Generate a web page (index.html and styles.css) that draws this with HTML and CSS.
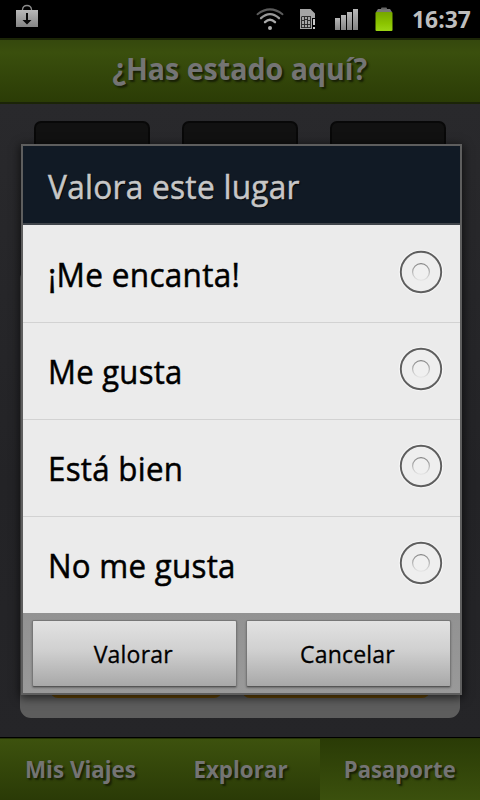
FILE: index.html
```html
<!DOCTYPE html>
<html lang="es">
<head>
<meta charset="utf-8">
<title>Valora este lugar</title>
<link rel="stylesheet" href="styles.css">
</head>
<body>
<div class="screen">
  <header class="status">
    <svg width="480" height="38" viewBox="0 0 480 38">
      <defs>
        <linearGradient id="grey" x1="0" y1="0" x2="0" y2="1"><stop offset="0" stop-color="#b8b8b8"/><stop offset="1" stop-color="#858585"/></linearGradient>
        <linearGradient id="green" x1="0" y1="0" x2="0" y2="1"><stop offset="0" stop-color="#76a600"/><stop offset="0.600" stop-color="#8bc400"/><stop offset="1" stop-color="#9bd414"/></linearGradient>
      </defs>
      <path d="M22.500 11V9.500Q23 5.500 27 5.500T31.500 9.500V11" fill="none" stroke="#8c8c8c" stroke-width="1.300"/>
      <path d="M16 10H38V27H16Z" fill="url(#grey)"/>
      <path d="M26 13H28V20H31.500L27 24.500L22.500 20H26Z" fill="#080808"/>
      <g fill="none" stroke-linecap="round">
        <path d="M257.500 14.200Q270 4.500 282.500 14.200" stroke="#5c5c5c" stroke-width="2"/>
        <path d="M261 18.200Q270 10 279 18.200" stroke="#999" stroke-width="2.300"/>
        <path d="M265 22.200Q270 17.500 275 22.200" stroke="#aaa" stroke-width="2.400"/>
      </g>
      <circle cx="270" cy="28" r="2" fill="#b0b0b0"/>
      <path d="M300 9H310.500L315 13.500V18H312V29H300Z" fill="#a5a5a5"/>
      <path d="M301.500 16.500H311M301.500 27.500H311M301.500 17V28M310.500 17V28M304.500 17V28M307.500 17V28M302 20.500H304M302 24.500H304M308 20.500H310M308 24.500H310M304.500 19.500H308M304.500 24.500H308" stroke="#222" stroke-width="0.900" fill="none"/>
      <path d="M313 19H315V25H313ZM313 27H315V29H313Z" fill="#c8c8c8"/>
      <g fill="url(#grey)"><rect x="335" y="18" width="5" height="12"/><rect x="341" y="15" width="5" height="15"/><rect x="347" y="12" width="5" height="18"/><rect x="353" y="9" width="5" height="21"/></g>
      <path d="M376 12L378 9H390L392 12Z" fill="#777"/><rect x="381" y="7.500" width="6" height="2" rx="1" fill="#666"/>
      <rect x="375.500" y="12" width="17" height="19" rx="1" fill="url(#green)"/>
    </svg>
    <span class="clock"><span class="fit">16:37</span></span>
  </header>
  <div class="appbar"><span class="fit">¿Has estado aquí?</span></div>
  <main class="page">
    <div class="slots"><i></i><i></i><i></i></div>
    <section class="card"><div class="actions"><i></i><i></i></div></section>
  </main>
  <nav class="tabs">
    <div class="tab"><span class="fit">Mis Viajes</span></div>
    <div class="tab"><span class="fit">Explorar</span></div>
    <div class="tab on"><span class="fit">Pasaporte</span></div>
  </nav>
  <div class="dialog">
    <h1><span class="fit">Valora este lugar</span></h1>
    <div class="option love"><span class="fit">¡Me encanta!</span><svg class="radio" viewBox="0 0 46 46"><use href="#dot"/></svg></div>
    <div class="option like"><span class="fit">Me gusta</span><svg class="radio" viewBox="0 0 46 46"><use href="#dot"/></svg></div>
    <div class="option fine"><span class="fit">Está bien</span><svg class="radio" viewBox="0 0 46 46"><use href="#dot"/></svg></div>
    <div class="option dislike"><span class="fit">No me gusta</span><svg class="radio" viewBox="0 0 46 46"><use href="#dot"/></svg></div>
    <div class="buttons"><button><span class="fit">Valorar</span></button><button><span class="fit">Cancelar</span></button></div>
  </div>
</div>
<svg width="0" height="0" class="defs">
  <linearGradient id="ring" x1="0" y1="0" x2="0" y2="1"><stop offset="0" stop-color="#858585"/><stop offset="1" stop-color="#e6e6e6"/></linearGradient>
  <symbol id="dot" viewBox="0 0 46 46"><circle cx="23" cy="23" r="22.300" fill="#f7f7f7"/><circle cx="23" cy="23" r="20.200" fill="#eeeeee" stroke="#5e5e5e" stroke-width="1.900"/><circle cx="23" cy="23" r="8.400" fill="#f0f0f0" stroke="url(#ring)" stroke-width="1.200"/></symbol>
</svg>
</body>
</html>
```
FILE: styles.css
```css
* { box-sizing: border-box; }
body { margin: 0; background: #000; font-family: "Open Sans", "Noto Sans", sans-serif; }
.screen { position: relative; width: 480px; height: 800px; overflow: hidden; display: flex; flex-direction: column; }
.defs { position: absolute; }
.fit { display: inline-block; white-space: nowrap; }
.status { height: 38px; flex: none; background: #000; position: relative; }
.status svg { display: block; }
.clock { position: absolute; right: 9px; top: 0; line-height: 38px; font-size: 24px; font-weight: 700; color: #bebebe; }
.clock .fit { transform: scaleX(.95); transform-origin: right; }
.appbar { height: 66px; flex: none; border-top: 2px solid #1c2607; border-bottom: 2px solid #1b2408; background: linear-gradient(#35480d, #3a4f0d 20%, #2b3c06); display: flex; align-items: center; justify-content: center; font-size: 30px; font-weight: 700; color: #747474; text-shadow: 2px 2px 2px #171f05; padding-bottom: 6px; }
.appbar .fit { transform: scaleX(.953); }
.page { height: 633px; flex: none; background: linear-gradient(#29292c, #232326 60%, #252528); padding: 17px 20px 0; overflow: hidden; }
.slots { display: flex; gap: 32px; padding: 0 14px; }
.slots i { width: 116px; height: 116px; border: 2px solid #080808; border-radius: 7px; background: #111; }
.card { height: 450px; margin-top: 31px; border-radius: 11px; background: #5d5d5d; display: flex; align-items: flex-end; padding: 0 30px 20px; }
.actions { flex: 1; display: flex; gap: 20px; }
.actions i { flex: 1; height: 50px; border-radius: 8px; background: #6a4806; }
.actions i:first-child { flex: none; width: 172px; }
.tabs { height: 62px; flex: none; display: grid; grid-template-columns: 1fr 1fr 1fr; margin-top: auto; border-top: 1px solid #263407; background: #34460a; }
.tab { display: flex; align-items: center; justify-content: center; padding-bottom: 3px; background: linear-gradient(#3d520e, #2a3a06); font-size: 24px; font-weight: 700; color: #747474; text-shadow: 2px 2px 2px #171f05; }
.tab .fit { transform: scaleX(.933); }
.tab.on { background: linear-gradient(#2a3b06, #3b500d); }
.tab.on .fit { transform: scaleX(.92); }
.dialog { position: absolute; left: 21px; top: 144px; width: 441px; height: 551px; border: 2px solid #5e5e5e; background: #ebebeb; box-shadow: 0 2px 9px 1px rgba(0,0,0,.65); display: flex; flex-direction: column; }
h1 { margin: 0; height: 79px; flex: none; background: #111a25; border-bottom: 2px solid #40454b; font-weight: 400; font-size: 33px; line-height: 82px; padding-left: 25px; color: #c7c7c7; text-shadow: 1px 1px 1px #000; -webkit-text-stroke: .5px #c7c7c7; }
h1 .fit { transform: scaleX(.96); letter-spacing: .25px; transform-origin: left; }
.option { height: 97px; flex: none; border-bottom: 1px solid #d2d2d2; display: flex; align-items: flex-start; justify-content: space-between; padding: 23px 16.5px 0 24.5px; font-size: 33px; color: #000; -webkit-text-stroke: .5px #000; }
.option .fit { line-height: 52px; transform-origin: left; letter-spacing: .3px; }
.love { height: 98px; padding-top: 24px; }
.love .fit { transform: scaleX(.956); }
.like .fit { transform: scaleX(.94); }
.fine .fit { transform: scaleX(.947); }
.dislike { height: 96px; border: 0; }
.dislike .fit { transform: scaleX(.947); }
.radio { width: 46px; height: 46px; }
.buttons { height: 80px; flex: 1; display: flex; gap: 9px; padding: 7px 9px 6px; background: linear-gradient(#929292, #999); }
button { flex: 1; border: 1px solid #777; border-bottom-color: #555; border-radius: 2px; background: linear-gradient(#e2e2e2, #d0d0d0 45%, #a8a8a8); box-shadow: 0 1px 2px rgba(0,0,0,.3); padding: 0 3px 0 0; font: 24px "Open Sans", sans-serif; color: #000; -webkit-text-stroke: .3px #000; }
button .fit { transform: scaleX(.96); letter-spacing: .2px; }
```
